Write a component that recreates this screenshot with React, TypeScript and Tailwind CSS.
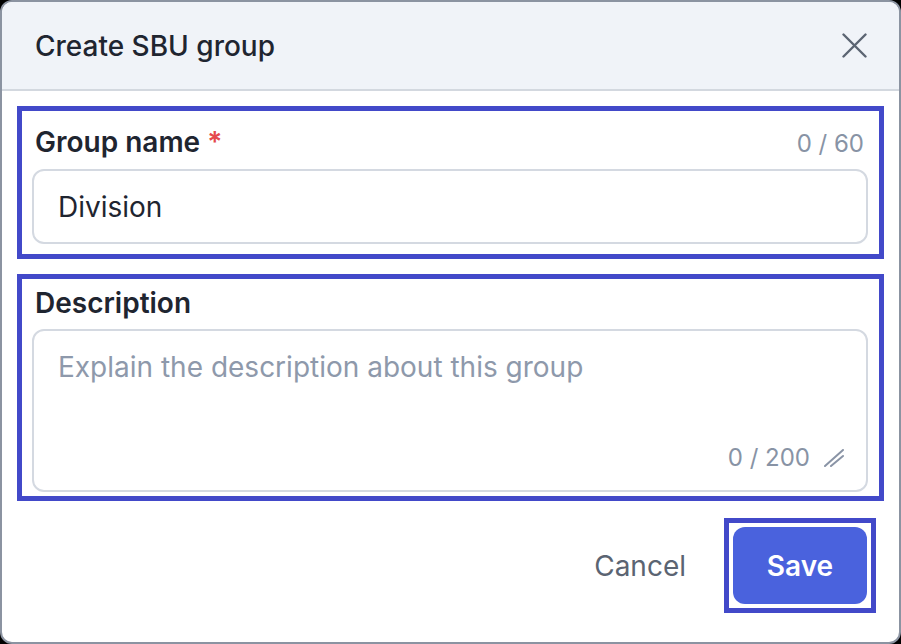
const HIGHLIGHT = "border-[5px] border-[#4249c9]";

function CloseIcon() {
  return (
    <svg width="25" height="25" viewBox="0 0 25 25" aria-hidden>
      <path d="M1.5 1.5 L23.5 23.5 M23.5 1.5 L1.5 23.5" stroke="currentColor" strokeWidth="2.4" strokeLinecap="round" />
    </svg>
  );
}

function ResizeGrip() {
  return (
    <svg width="20" height="18" viewBox="0 0 20 18" className="text-[#8a94a6]" aria-hidden>
      <path d="M1 17 L19 1" stroke="currentColor" strokeWidth="2" strokeLinecap="round" />
      <path d="M7 17 L19 7" stroke="currentColor" strokeWidth="2" strokeLinecap="round" />
    </svg>
  );
}

export default function App() {
  return (
    <div className="h-[644px] w-[901px] bg-black font-['Inter',sans-serif]">
      <div className="flex h-full flex-col overflow-hidden rounded-[12px] border-2 border-[#8b93a1] bg-white">
        {/* Header */}
        <div className="flex h-[89px] shrink-0 items-center justify-between border-b-2 border-[#d3d8df] bg-[#f0f3f8] pl-[33px] pr-[32px]">
          <h2 className="text-[28px] font-medium leading-8 text-[#1f2530]">Create SBU group</h2>
          <button className="flex h-[25px] w-[25px] items-center justify-center text-[#5b6472]" aria-label="Close">
            <CloseIcon />
          </button>
        </div>

        {/* Body */}
        <div className="flex flex-col px-[15px] pt-[15px]">
          <div className={`${HIGHLIGHT} flex flex-col gap-[9px] pb-[10px] pl-[10px] pr-[11px] pt-[15px]`}>
            <div className="flex items-baseline justify-between pl-[3px] pr-[4px]">
              <label className="text-[28px] font-semibold leading-8 text-[#1f2530]">
                Group name <span className="text-[#e5484d]">*</span>
              </label>
              <span className="text-[24px] leading-8 text-[#8893a5]">0 / 60</span>
            </div>
            <div className="flex h-[75px] items-center rounded-[12px] border-2 border-[#d4d9e1] px-[24px] text-[28px] text-[#1f2530]">
              Division
            </div>
          </div>

          <div className={`${HIGHLIGHT} mt-[15px] flex flex-col gap-[10px] pb-[4px] pl-[10px] pr-[11px] pt-[8px]`}>
            <label className="pl-[3px] text-[28px] font-semibold leading-8 text-[#1f2530]">Description</label>
            <div className="flex h-[163px] flex-col justify-between rounded-[12px] border-2 border-[#d4d9e1] pb-[16px] pl-[24px] pr-[22px] pt-[20px]">
              <span className="text-[28px] leading-8 text-[#8e99ab]">Explain the description about this group</span>
              <div className="flex items-center justify-end gap-[14px]">
                <span className="text-[24px] leading-8 text-[#8893a5]">0 / 200</span>
                <ResizeGrip />
              </div>
            </div>
          </div>

          {/* Footer */}
          <div className="mt-[17px] flex items-center justify-end gap-[38px] pr-[8px]">
            <button className="text-[28px] leading-8 text-[#5b6472]">Cancel</button>
            <div className={`${HIGHLIGHT} p-[4px]`}>
              <button className="flex h-[77px] w-[134px] items-center justify-center rounded-[12px] bg-[#4a62dd] text-[28px] font-semibold text-white">
                Save
              </button>
            </div>
          </div>
        </div>
      </div>
    </div>
  );
}
